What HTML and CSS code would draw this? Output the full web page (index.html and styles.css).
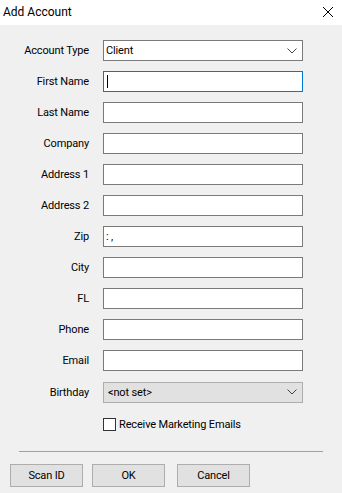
FILE: index.html
```html
<!DOCTYPE html>
<html>
<head>
<meta charset="utf-8">
<link rel="stylesheet" href="styles.css">
</head>
<body>
<div class="dialog">
  <div class="titlebar">
    <span class="title">Add Account</span>
    <svg class="close" width="12" height="12" viewBox="0 0 12 12"><path d="M1 1 L11 11 M11 1 L1 11" stroke="#000" stroke-width="1" fill="none"/></svg>
  </div>
  <div class="body">
    <div class="form">
      <label class="lbl">Account Type</label>
      <div class="combo"><span>Client</span><svg class="chev" width="10" height="6" viewBox="0 0 10 6"><path d="M0.5 0.5 L5 5 L9.5 0.5" stroke="#444" fill="none"/></svg></div>
      <label class="lbl">First Name</label>
      <div class="field focus"><span class="caret"></span></div>
      <label class="lbl">Last Name</label>
      <div class="field"></div>
      <label class="lbl">Company</label>
      <div class="field"></div>
      <label class="lbl">Address 1</label>
      <div class="field"></div>
      <label class="lbl">Address 2</label>
      <div class="field"></div>
      <label class="lbl">Zip</label>
      <div class="field"><span>: ,</span></div>
      <label class="lbl">City</label>
      <div class="field"></div>
      <label class="lbl">FL</label>
      <div class="field"></div>
      <label class="lbl">Phone</label>
      <div class="field"></div>
      <label class="lbl">Email</label>
      <div class="field"></div>
      <label class="lbl bday">Birthday</label>
      <div class="combo gray bday"><span>&lt;not set&gt;</span><svg class="chev" width="10" height="6" viewBox="0 0 10 6"><path d="M0.5 0.5 L5 5 L9.5 0.5" stroke="#444" fill="none"/></svg></div>
      <div></div>
      <div class="check"><span class="box"></span><span>Receive Marketing Emails</span></div>
    </div>
    <div class="sep"></div>
    <div class="buttons">
      <div class="btn">Scan ID</div>
      <div class="btn">OK</div>
      <div class="btn">Cancel</div>
    </div>
  </div>
</div>
</body>
</html>
```
FILE: styles.css
```css
html, body {
  margin: 0;
  padding: 0;
}
body {
  width: 342px;
  height: 493px;
  background: #f0f0f0;
  font-family: Roboto, "Noto Sans", sans-serif;
  font-size: 11px;
  letter-spacing: -0.15px;
  color: #000;
  overflow: hidden;
}
.titlebar {
  height: 25px;
  background: #fff;
  display: flex;
  align-items: center;
  justify-content: space-between;
  padding: 0 8px 0 3px;
}
.title {
  font-size: 12px;
  letter-spacing: 0;
  margin-top: -1px;
}
.close {
  margin-top: -2px;
}
.body {
  padding-top: 15px;
}
.form {
  display: grid;
  grid-template-columns: 89px 200px;
  column-gap: 14px;
  row-gap: 10px;
  grid-auto-rows: 21px;
  align-items: center;
}
.lbl {
  text-align: right;
  line-height: 21px;
  white-space: nowrap;
}
.field, .combo {
  box-sizing: border-box;
  height: 21px;
  border: 1px solid #7a7a7a;
  background: #fff;
  display: flex;
  align-items: center;
  padding-left: 2px;
}
.field.focus {
  border-color: #0078d7;
}
.caret {
  width: 1px;
  height: 13px;
  background: #000;
  margin-left: 1px;
}
.combo {
  justify-content: space-between;
  padding-right: 5px;
}
.combo.gray {
  background: #e1e1e1;
  border-color: #adadad;
  padding-left: 4px;
}
.bday {
  margin-top: 1px;
}
.check {
  display: flex;
  align-items: center;
  gap: 3px;
  margin-top: 3px;
}
.box {
  box-sizing: border-box;
  width: 13px;
  height: 13px;
  border: 1px solid #333;
  background: #fff;
}
.sep {
  margin: 18px 19px 0 19px;
  height: 1px;
  background: #a0a0a0;
}
.buttons {
  display: flex;
  gap: 9px;
  padding: 12px 0 0 10px;
}
.btn {
  box-sizing: border-box;
  width: 73px;
  height: 23px;
  background: #e1e1e1;
  border: 1px solid #adadad;
  display: flex;
  align-items: center;
  justify-content: center;
}
.btn + .btn + .btn {
  margin-left: 3px;
}
```
